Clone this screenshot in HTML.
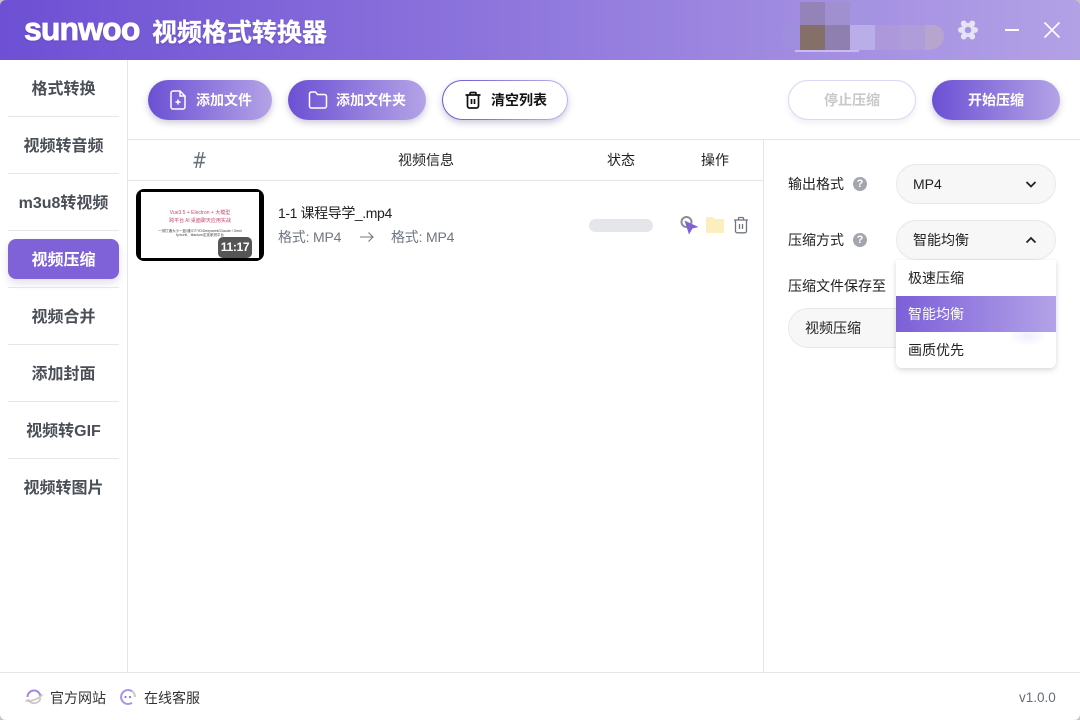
<!DOCTYPE html>
<html lang="zh"><head><meta charset="utf-8"><style>
*{box-sizing:border-box}
html,body{margin:0;padding:0;width:1080px;height:720px;overflow:hidden;background:#fff}
body{font-family:"Liberation Sans","Noto Sans CJK SC",sans-serif;position:relative;color:#222}
.a{position:absolute}
.t{position:absolute;white-space:nowrap;line-height:20px}
.cjk{font-family:"Noto Sans CJK SC",sans-serif}
#head{left:0;top:0;width:1080px;height:60px;background:linear-gradient(90deg,#6d50d4 0%,#b3a1e6 100%)}
.nav{position:absolute;left:8px;width:111px;height:40px;line-height:44px;text-align:center;font-size:16px;font-weight:700;color:#4a4f57;font-family:"Liberation Sans","Noto Sans CJK SC",sans-serif}
.sep{position:absolute;left:8px;width:111px;height:1px;background:#e6e6e8}
.btn{position:absolute;top:80px;height:40px;border-radius:20px;box-shadow:0 3px 7px rgba(60,50,110,.25);color:#fff;font-size:14px;font-weight:700;line-height:40px;font-family:"Noto Sans CJK SC",sans-serif}
.pur{background:linear-gradient(90deg,#6c50d4 0%,#b4a3e6 100%)}
.sel{position:absolute;left:896px;width:160px;height:40px;border:1px solid #e8e8e8;border-radius:20px;background:#f7f7f7;font-size:14px;line-height:38px;padding-left:16px;color:#222}
.q{position:absolute;width:14px;height:14px;border-radius:50%;background:#a3a6ae;color:#fff;font-size:11px;font-weight:700;text-align:center;line-height:14px}
.lab{position:absolute;left:788px;font-size:14px;line-height:20px;color:#222;white-space:nowrap}
</style></head><body>

<div class="a" id="head"></div>
<div class="t" style="left:24px;top:14px;font-size:32px;line-height:30px;font-weight:700;color:#fff;letter-spacing:-.9px;-webkit-text-stroke:.8px #fff;text-shadow:0 1px 2px rgba(50,30,120,.3)">sunwoo</div>
<div class="t cjk" style="left:152px;top:16px;font-size:25px;line-height:30px;font-weight:700;color:#fff;-webkit-text-stroke:.3px #fff;text-shadow:0 1px 2px rgba(50,30,120,.3)">视频格式转换器</div>

<div class="a" style="left:781px;top:25px;width:163px;height:25px;background:#9f8ddd;border-radius:14px 20px 24px 20px"></div>
<div class="a" style="left:800px;top:2px;width:25px;height:23px;background:#9383b8"></div>
<div class="a" style="left:825px;top:2px;width:25px;height:23px;background:#a090d0"></div>
<div class="a" style="left:850px;top:2px;width:25px;height:23px;background:#a493e0"></div>
<div class="a" style="left:800px;top:25px;width:25px;height:25px;background:#847069"></div>
<div class="a" style="left:825px;top:25px;width:25px;height:25px;background:#8f7fb0"></div>
<div class="a" style="left:850px;top:25px;width:25px;height:25px;background:#baaee8"></div>
<div class="a" style="left:875px;top:25px;width:25px;height:25px;background:#ad98dc"></div>
<div class="a" style="left:900px;top:25px;width:25px;height:25px;background:#ae9dd8"></div>
<div class="a" style="left:925px;top:25px;width:19px;height:25px;background:#b7a5d0;border-radius:0 14px 18px 0"></div>
<div class="a" style="left:795px;top:50px;width:64px;height:2px;background:#c8bcee"></div>

<svg class="a" style="left:958px;top:20px" width="20" height="20" viewBox="0 0 20 20"><g fill="#e6e3f2"><circle cx="10" cy="10" r="7"/><circle cx="5.800" cy="3.500" r="3"/><circle cx="14.200" cy="3.500" r="3"/><circle cx="2.900" cy="10" r="2.900"/><circle cx="17.100" cy="10" r="2.900"/><circle cx="5.800" cy="16.500" r="3"/><circle cx="14.200" cy="16.500" r="3"/></g><circle cx="10" cy="10" r="3.300" fill="#a996e2"/></svg>
<div class="a" style="left:1005px;top:29px;width:14px;height:2px;background:#fff"></div>
<svg class="a" style="left:1043px;top:21px" width="18" height="18" viewBox="0 0 18 18"><path d="M1.500 1.500l15 15M16.500 1.500l-15 15" stroke="#fff" stroke-width="1.600" fill="none"/></svg>

<!-- sidebar -->
<div class="a" style="left:127px;top:60px;width:1px;height:612px;background:#e6e6e8"></div>
<div class="nav" style="top:68px">格式转换</div><div class="sep" style="top:116px"></div>
<div class="nav" style="top:125px">视频转音频</div><div class="sep" style="top:173px"></div>
<div class="nav" style="top:182px">m3u8转视频</div><div class="sep" style="top:230px"></div>
<div class="nav" style="top:239px;background:#7f62d8;color:#fff;border-radius:8px;box-shadow:0 4px 8px rgba(60,50,110,.15)">视频压缩</div><div class="sep" style="top:287px"></div>
<div class="nav" style="top:296px">视频合并</div><div class="sep" style="top:344px"></div>
<div class="nav" style="top:353px">添加封面</div><div class="sep" style="top:401px"></div>
<div class="nav" style="top:410px">视频转GIF</div><div class="sep" style="top:458px"></div>
<div class="nav" style="top:467px">视频转图片</div>

<!-- toolbar -->
<div class="btn pur" style="left:148px;width:124px"><span class="a" style="left:48px;top:0">添加文件</span>
<svg class="a" style="left:20px;top:10px" width="20" height="20" viewBox="0 0 20 20" fill="none" stroke="#fff" stroke-width="1.500"><path d="M3 3a2 2 0 0 1 2-2h7l5 5v11a2 2 0 0 1-2 2H5a2 2 0 0 1-2-2zM12 1v5h5M10 9.500v5M7.500 12h5"/></svg></div>
<div class="btn pur" style="left:288px;width:138px"><span class="a" style="left:48px;top:0">添加文件夹</span>
<svg class="a" style="left:20px;top:10px" width="20" height="20" viewBox="0 0 20 20" fill="none" stroke="#fff" stroke-width="1.500"><path d="M1.500 4a2 2 0 0 1 2-2h4l2 2.500h7a2 2 0 0 1 2 2V16a2 2 0 0 1-2 2h-13a2 2 0 0 1-2-2z"/></svg></div>
<div class="btn" style="left:442px;width:126px;padding:1px;background:linear-gradient(90deg,#6c50d4,#c0b2ec);color:#111"><div style="width:100%;height:100%;background:#fff;border-radius:19px"></div>
<span class="a" style="left:49px;top:0">清空列表</span>
<svg class="a" style="left:21px;top:10px" width="20" height="20" viewBox="0 0 20 20" fill="none" stroke="#111" stroke-width="1.700"><path d="M2.500 5h15M7 5V3.500A1 1 0 0 1 8 2.500h4a1 1 0 0 1 1 1V5M4.500 5v11a2 2 0 0 0 2 2h7a2 2 0 0 0 2-2V5M8.500 9v5M11.500 9v5"/></svg></div>
<div class="btn" style="left:788px;width:128px;background:#fff;border:1px solid #dcd5f5;color:#c8c8c8;text-align:center;line-height:38px;box-shadow:0 3px 6px rgba(60,50,110,.08)">停止压缩</div>
<div class="btn pur" style="left:932px;width:128px;text-align:center">开始压缩</div>

<!-- table -->
<div class="a" style="left:128px;top:139px;width:952px;height:1px;background:#e6e6e8"></div>
<div class="a" style="left:128px;top:180px;width:635px;height:1px;background:#e6e6e8"></div>
<div class="a" style="left:763px;top:140px;width:1px;height:532px;background:#e6e6e8"></div>
<div class="t" style="left:192px;top:152px;font-family:'DejaVu Sans',sans-serif;font-size:18px;color:#6a707c;transform:scaleY(1.22)">#</div>
<div class="t cjk" style="left:398px;top:150px;font-size:14px;color:#222">视频信息</div>
<div class="t cjk" style="left:607px;top:150px;font-size:14px;color:#222">状态</div>
<div class="t cjk" style="left:701px;top:150px;font-size:14px;color:#222">操作</div>

<div class="a" style="left:136px;top:189px;width:128px;height:72px;background:#000;border-radius:8px;overflow:hidden">
 <div class="a" style="left:5px;top:3px;width:118px;height:66px;background:#fff"></div>
 <div class="t" style="left:0;width:128px;text-align:center;top:20px;font-size:5px;line-height:8px;color:#c8486c;filter:blur(.25px)">Vue3.5 + Electron + 大模型</div>
 <div class="t cjk" style="left:0;width:128px;text-align:center;top:28px;font-size:5px;line-height:8px;color:#c8486c;filter:blur(.25px)">跨平台 AI 桌面聊天应用实战</div>
 <div class="t" style="left:0;width:128px;text-align:center;top:39px;font-size:3.500px;line-height:6px;color:#444;filter:blur(.25px)">一测打通大小一蓝/通义/TYD/Deepseek/Claude / Gemi</div>
 <div class="t" style="left:0;width:128px;text-align:center;top:43px;font-size:3.500px;line-height:6px;color:#444;filter:blur(.25px)">fy/xunfi、titanium定技家测平台</div>
 <div class="a" style="left:82px;top:48px;width:34px;height:21px;border-radius:5px;background:#555;color:#fff;font-size:12px;font-weight:700;line-height:21px;text-align:center;letter-spacing:-.3px">11:17</div>
</div>
<div class="t" style="left:278px;top:203px;font-size:14px;letter-spacing:-.4px;color:#222">1-1 课程导学_.mp4</div>
<div class="t" style="left:278px;top:227px;font-size:14px;letter-spacing:-.2px;color:#6f7682">格式: MP4</div>
<svg class="a" style="left:359px;top:231px" width="15" height="12" viewBox="0 0 15 12" fill="none" stroke="#6f7682" stroke-width="1.100"><path d="M1 6h13M9.500 1.500L14 6l-4.500 4.500"/></svg>
<div class="t" style="left:391px;top:227px;font-size:14px;letter-spacing:-.2px;color:#6f7682">格式: MP4</div>

<div class="a" style="left:589px;top:219px;width:64px;height:13px;border-radius:7px;background:#e5e6ea"></div>
<svg class="a" style="left:679px;top:215px" width="20" height="20" viewBox="0 0 20 20"><circle cx="7.500" cy="7" r="5" fill="none" stroke="#8c8c90" stroke-width="2"/><path d="M5.500 5.500L19.500 12l-6 1.500-3.500 6z" fill="#7f62d8"/></svg>
<svg class="a" style="left:705px;top:216px" width="20" height="18" viewBox="0 0 20 18"><path fill="#fdeebd" d="M1 2.500A1.500 1.500 0 0 1 2.500 1H8l2 2h8a1.500 1.500 0 0 1 1 1.500V16a1 1 0 0 1-1 1H2a1 1 0 0 1-1-1z"/></svg>
<svg class="a" style="left:732px;top:216px" width="18" height="18" viewBox="0 0 18 18" fill="none" stroke="#6f7682" stroke-width="1.300"><path d="M2 4h14M6.500 4V2.500a1 1 0 0 1 1-1h3a1 1 0 0 1 1 1V4M3.500 4v11a1.800 1.800 0 0 0 1.800 1.800h7.400A1.800 1.800 0 0 0 14.500 15V4M7.500 8v5M10.500 8v5"/></svg>

<!-- right panel -->
<div class="lab cjk" style="top:174px">输出格式</div>
<div class="q" style="left:853px;top:177px">?</div>
<div class="sel" style="top:164px">MP4<svg class="a" style="left:127px;top:12px" width="14" height="14" viewBox="0 0 14 14" fill="none" stroke="#222" stroke-width="1.800"><path d="M2.500 5l4.500 4.500L11.500 5"/></svg></div>
<div class="lab cjk" style="top:230px">压缩方式</div>
<div class="q" style="left:853px;top:233px">?</div>
<div class="sel cjk" style="top:220px">智能均衡<svg class="a" style="left:127px;top:12px" width="14" height="14" viewBox="0 0 14 14" fill="none" stroke="#222" stroke-width="1.800"><path d="M2.500 9.500L7 5l4.500 4.500"/></svg></div>
<div class="lab cjk" style="top:276px">压缩文件保存至</div>
<div class="sel cjk" style="left:788px;top:308px;width:268px">视频压缩</div>

<div class="a" style="left:896px;top:260px;width:160px;height:108px;background:#fff;border-radius:0 0 6px 6px;box-shadow:0 2px 6px rgba(0,0,0,.16);overflow:hidden;font-size:14px;font-family:'Noto Sans CJK SC',sans-serif">
 <div class="a" style="left:112px;top:66px;width:40px;height:20px;border-radius:50%;background:radial-gradient(closest-side,#f1edfc,#fff)"></div>
 <div class="t" style="left:12px;top:8px;color:#222">极速压缩</div>
 <div class="a" style="left:0;top:36px;width:160px;height:36px;background:linear-gradient(90deg,#7b5fd8,#b3a2e8)"></div>
 <div class="t" style="left:12px;top:44px;color:#fff">智能均衡</div>
 <div class="t" style="left:12px;top:80px;color:#222">画质优先</div>
</div>

<!-- footer -->
<div class="a" style="left:0;top:672px;width:1080px;height:1px;background:#e6e6e8"></div>
<svg class="a" style="left:24px;top:688px" width="20" height="18" viewBox="0 0 20 18" fill="none"><path d="M3.500 9a6.500 6.500 0 0 1 13 0" stroke="#9d89e2" stroke-width="2"/><path d="M1.500 12.500c4 1.500 13-1 17-6M4 11a6.500 6.500 0 0 0 12.500-1" stroke="#cfc6c4" stroke-width="1.800"/></svg>
<div class="t cjk" style="left:50px;top:688px;font-size:14px;color:#333">官方网站</div>
<svg class="a" style="left:119px;top:688px" width="18" height="18" viewBox="0 0 18 18" fill="none"><path d="M13 3.200A7 7 0 1 0 13 14.800" stroke="#a794e4" stroke-width="2"/><path d="M13 3.200A7 7 0 0 1 16 9" stroke="#cfc8bc" stroke-width="2"/><circle cx="6.500" cy="9" r="1.100" fill="#8a72dc"/><circle cx="11" cy="9" r="1.100" fill="#8a72dc"/></svg>
<div class="t cjk" style="left:144px;top:688px;font-size:14px;color:#333">在线客服</div>
<div class="t" style="left:1019px;top:688px;font-size:13.500px;color:#666c78">v1.0.0</div>
<div class="a" style="left:0;top:0;width:1080px;height:720px;border-radius:6px;box-shadow:0 0 0 8px #c4c4c8"></div>
</body></html>
